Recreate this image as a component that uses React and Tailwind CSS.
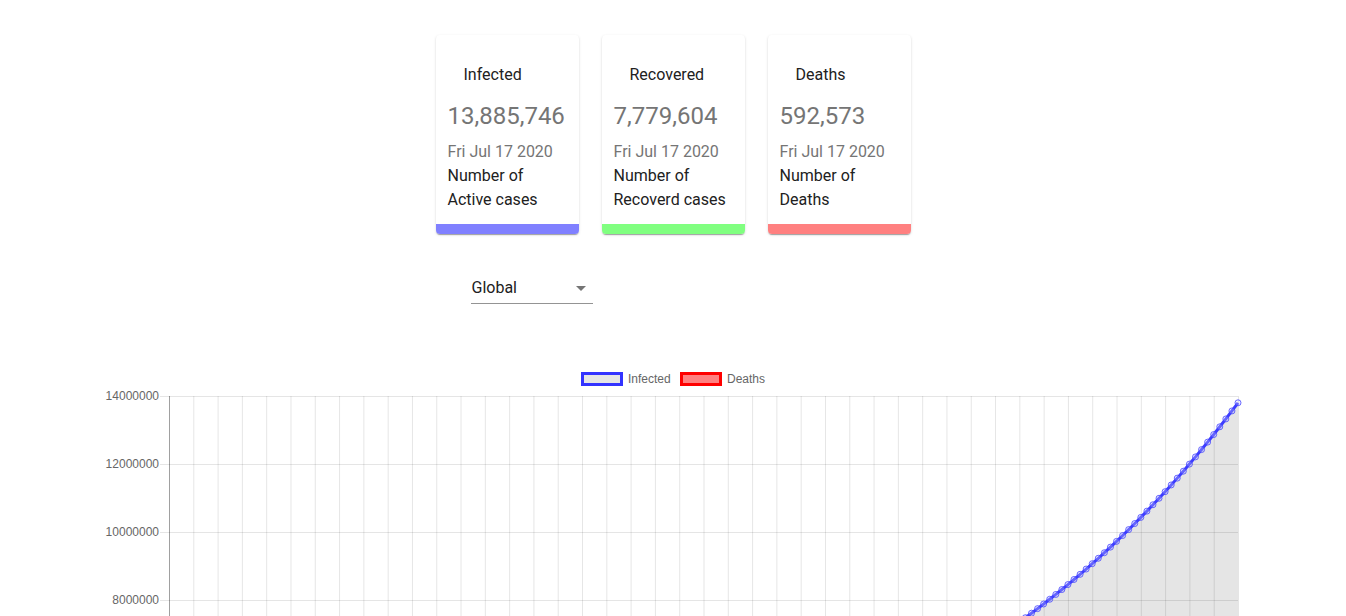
import React from 'react';

const cards = [
  { title: 'Infected', value: '13,885,746', date: 'Fri Jul 17 2020', desc: 'Number of Active cases', bar: 'bg-[#8080ff]' },
  { title: 'Recovered', value: '7,779,604', date: 'Fri Jul 17 2020', desc: 'Number of Recoverd cases', bar: 'bg-[#80ff80]' },
  { title: 'Deaths', value: '592,573', date: 'Fri Jul 17 2020', desc: 'Number of Deaths', bar: 'bg-[#ff8080]' },
];

// chart geometry (svg coords, svg top sits at page y = 360)
const TOP = 360;
const X0 = 169;
const X1 = 1238;
const N = 177;
const STEP = (X1 - X0) / (N - 1);
const yOf = (v) => 872 - (v / 2000000) * 68 - TOP;

const infected = Array.from({ length: N }, (_, i) => 13800000 * Math.exp(0.0175 * (i - 176)));
const deaths = Array.from({ length: N }, (_, i) => 592573 * Math.exp(0.012 * (i - 176)));

function StatCard({ title, value, date, desc, bar }) {
  return (
    <div className="w-[143px] h-[199px] bg-white rounded-[4px] overflow-hidden flex flex-col shadow-[0px_2px_1px_-1px_rgba(0,0,0,0.2),0px_1px_1px_0px_rgba(0,0,0,0.14),0px_1px_3px_0px_rgba(0,0,0,0.12)]">
      <div className="flex-1 px-[12px] pt-[28px]">
        <div className="pl-[16px] text-[16px] leading-[24px] text-[#212121]">{title}</div>
        <div className="mt-[13px] text-[24px] leading-[32px] text-[#757575]">{value}</div>
        <div className="mt-[8px] text-[16px] leading-[24px] text-[#757575]">{date}</div>
        <div className="text-[16px] leading-[24px] text-[#212121]">{desc}</div>
      </div>
      <div className={`h-[10px] ${bar}`}></div>
    </div>
  );
}

function Chart() {
  const pts = infected.map((v, i) => [X0 + i * STEP, yOf(v)]);
  const dpts = deaths.map((v, i) => [X0 + i * STEP, yOf(v)]);
  const line = pts.map((p) => p.join(',')).join(' ');
  const area = `${X0},${yOf(0)} ${line} ${X1},${yOf(0)}`;
  const dline = dpts.map((p) => p.join(',')).join(' ');
  const vlines = [];
  for (let i = 0; i < N; i += 4) vlines.push(X0 + i * STEP);
  const ticks = [14000000, 12000000, 10000000, 8000000];

  return (
    <svg width="1346" height="256" className="block" style={{ fontFamily: '"Liberation Sans", Arial, sans-serif' }}>
      {/* legend */}
      <rect x="582.5" y="13.5" width="39" height="11" fill="#e5e5e5" stroke="#3333ff" strokeWidth="3" />
      <text x="628" y="23" fontSize="12" fill="#666">Infected</text>
      <rect x="681.5" y="13.5" width="39" height="11" fill="#ff8080" stroke="#ff0000" strokeWidth="3" />
      <text x="727" y="23" fontSize="12" fill="#666">Deaths</text>

      {/* grid */}
      {vlines.map((x, i) => (
        <line key={i} x1={x + 0.5} x2={x + 0.5} y1={yOf(14000000)} y2={yOf(0)} stroke="rgba(0,0,0,0.1)" />
      ))}
      {ticks.map((t) => (
        <g key={t}>
          <line x1="160" x2={X1} y1={yOf(t) + 0.5} y2={yOf(t) + 0.5} stroke="rgba(0,0,0,0.1)" />
          <text x="159" y={yOf(t) + 4} fontSize="12" fill="#666" textAnchor="end">{t}</text>
        </g>
      ))}
      <line x1={X0 + 0.5} x2={X0 + 0.5} y1={yOf(14000000)} y2={yOf(0)} stroke="rgba(0,0,0,0.3)" />

      {/* deaths */}
      <polyline points={dline} fill="none" stroke="rgba(255,0,0,0.8)" strokeWidth="3" />

      {/* infected */}
      <polygon points={area} fill="rgba(0,0,0,0.1)" />
      <polyline points={line} fill="none" stroke="rgba(40,40,255,0.9)" strokeWidth="3" strokeLinejoin="round" />
      {pts.map(([x, y], i) => (
        <circle key={i} cx={x} cy={y} r="3" fill="rgba(200,200,255,0.3)" stroke="rgba(60,60,255,0.75)" strokeWidth="1" />
      ))}
    </svg>
  );
}

export default function App() {
  return (
    <div className="h-[616px] overflow-hidden bg-white" style={{ fontFamily: 'Roboto, "Liberation Sans", Arial, sans-serif' }}>
      <div className="flex justify-center gap-[23px] pt-[35px]">
        {cards.map((c) => (
          <StatCard key={c.title} {...c} />
        ))}
      </div>

      <div className="mt-[37px] flex justify-center">
        <div className="w-[475px] pl-[35px]">
          <div className="w-[122px] border-b border-[#949494] flex items-center justify-between pt-[7px] pb-[6px]">
            <span className="pl-[1px] text-[16px] leading-[19px] text-[#212121]">Global</span>
            <svg width="24" height="24" viewBox="0 0 24 24" className="-my-[3px]">
              <path d="M7 10l5 5 5-5z" fill="rgba(0,0,0,0.54)" />
            </svg>
          </div>
        </div>
      </div>

      <div className="mt-[56px]">
        <Chart />
      </div>
    </div>
  );
}
